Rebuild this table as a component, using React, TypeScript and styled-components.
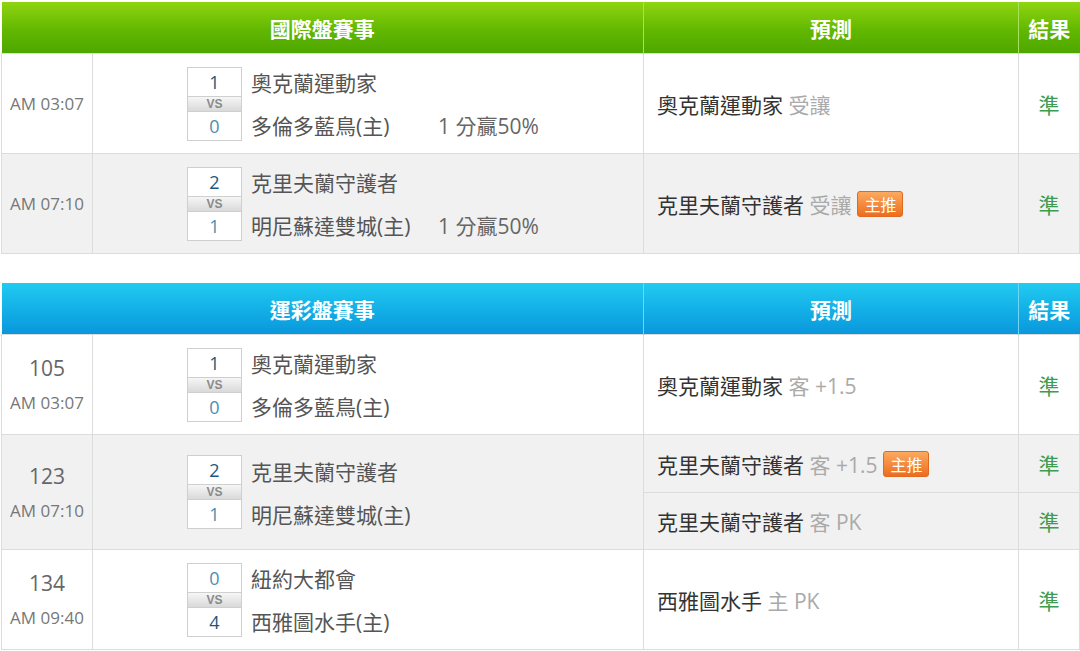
import React from "react";
import styled, { createGlobalStyle } from "styled-components";

const GlobalStyle = createGlobalStyle`
  html, body {
    margin: 0;
    padding: 0;
    background: #fff;
    font-family: "Open Sans", "Noto Sans CJK TC", sans-serif;
  }
`;

type Match = {
  no?: string;
  time: string;
  home: { name: string; score: number };
  away: { name: string; score: number };
  spread?: string;
  picks: { team: string; tip: string; hot?: boolean; result: string }[];
  shade?: boolean;
};

const intl: Match[] = [
  {
    time: "AM 03:07",
    home: { name: "奧克蘭運動家", score: 1 },
    away: { name: "多倫多藍鳥(主)", score: 0 },
    spread: "1 分贏50%",
    picks: [{ team: "奧克蘭運動家", tip: "受讓", result: "準" }],
  },
  {
    time: "AM 07:10",
    home: { name: "克里夫蘭守護者", score: 2 },
    away: { name: "明尼蘇達雙城(主)", score: 1 },
    spread: "1 分贏50%",
    picks: [{ team: "克里夫蘭守護者", tip: "受讓", hot: true, result: "準" }],
    shade: true,
  },
];

const lottery: Match[] = [
  {
    no: "105",
    time: "AM 03:07",
    home: { name: "奧克蘭運動家", score: 1 },
    away: { name: "多倫多藍鳥(主)", score: 0 },
    picks: [{ team: "奧克蘭運動家", tip: "客 +1.5", result: "準" }],
  },
  {
    no: "123",
    time: "AM 07:10",
    home: { name: "克里夫蘭守護者", score: 2 },
    away: { name: "明尼蘇達雙城(主)", score: 1 },
    picks: [
      { team: "克里夫蘭守護者", tip: "客 +1.5", hot: true, result: "準" },
      { team: "克里夫蘭守護者", tip: "客 PK", result: "準" },
    ],
    shade: true,
  },
  {
    no: "134",
    time: "AM 09:40",
    home: { name: "紐約大都會", score: 0 },
    away: { name: "西雅圖水手(主)", score: 4 },
    picks: [{ team: "西雅圖水手", tip: "主 PK", result: "準" }],
  },
];

const App = () => {
  return (
    <Page>
      <GlobalStyle />
      <Board title="國際盤賽事" tone="green" rows={intl} />
      <Board title="運彩盤賽事" tone="blue" rows={lottery} />
    </Page>
  );
};

const Board = ({
  title,
  tone,
  rows,
}: {
  title: string;
  tone: "green" | "blue";
  rows: Match[];
}) => (
  <Table>
    <colgroup>
      <col style={{ width: 91 }} />
      <col style={{ width: 551 }} />
      <col style={{ width: 375 }} />
      <col style={{ width: 61 }} />
    </colgroup>
    <thead>
      <tr>
        <Th tone={tone} colSpan={2}>
          {title}
        </Th>
        <Th tone={tone}>預測</Th>
        <Th tone={tone}>結果</Th>
      </tr>
    </thead>
    <tbody>
      {rows.map((m, i) =>
        m.picks.map((p, j) => (
          <Row
            key={`${i}-${j}`}
            shade={!!m.shade}
            style={{
              height: m.picks.length > 1 ? (j === 0 ? 58 : 57) : 100,
            }}
          >
            {j === 0 && (
              <>
                <TimeCell rowSpan={m.picks.length}>
                  {m.no && <GameNo>{m.no}</GameNo>}
                  <Time>{m.time}</Time>
                </TimeCell>
                <MatchCell rowSpan={m.picks.length}>
                  <MatchInner>
                    <ScoreBox>
                      <Score win={m.home.score > m.away.score}>
                        {m.home.score}
                      </Score>
                      <Vs>VS</Vs>
                      <Score win={m.away.score > m.home.score}>
                        {m.away.score}
                      </Score>
                    </ScoreBox>
                    <Teams>
                      <TeamLine>
                        <TeamName>{m.home.name}</TeamName>
                      </TeamLine>
                      <TeamLine>
                        <TeamName>{m.away.name}</TeamName>
                        {m.spread && <Spread>{m.spread}</Spread>}
                      </TeamLine>
                    </Teams>
                  </MatchInner>
                </MatchCell>
              </>
            )}
            <PickCell>
              <PickTeam>{p.team}</PickTeam> <Tip>{p.tip}</Tip>
              {p.hot && <Hot>主推</Hot>}
            </PickCell>
            <ResultCell>{p.result}</ResultCell>
          </Row>
        ))
      )}
    </tbody>
  </Table>
);

const Page = styled.div`
  padding: 2px 1px 0 1px;
  display: flex;
  flex-direction: column;
  gap: 29px;
`;

const Table = styled.table`
  width: 1078px;
  border-collapse: collapse;
  table-layout: fixed;
`;

const Th = styled.th<{ tone: "green" | "blue" }>`
  height: 51px;
  padding: 0;
  color: #fff;
  font-size: 21px;
  font-weight: bold;
  font-family: "Noto Sans CJK TC", sans-serif;
  text-align: center;
  background: ${(p) =>
    p.tone === "green"
      ? "linear-gradient(to bottom, #8fd410 0%, #62b800 55%, #4ea600 100%)"
      : "linear-gradient(to bottom, #22cbf0 0%, #12aee6 55%, #0a97dc 100%)"};
  border-left: 1px solid
    ${(p) => (p.tone === "green" ? "#a8e060" : "#6fd6f6")};
  &:first-child {
    border-left: none;
  }
`;

const Row = styled.tr<{ shade: boolean }>`
  background: ${(p) => (p.shade ? "#f1f1f1" : "#fff")};
  td {
    border: 1px solid #dcdcdc;
    padding: 0;
  }
`;

const TimeCell = styled.td`
  text-align: center;
  vertical-align: middle;
`;

const GameNo = styled.div`
  font-size: 21px;
  color: #666;
  line-height: 26px;
  margin-bottom: 10px;
`;

const Time = styled.div`
  font-size: 17px;
  color: #777;
`;

const MatchCell = styled.td`
  vertical-align: middle;
`;

const MatchInner = styled.div`
  width: 362px;
  margin: 0 auto;
  display: flex;
  align-items: center;
  gap: 9px;
`;

const ScoreBox = styled.div`
  width: 53px;
  border: 1px solid #cfcfcf;
  background: #fff;
  display: flex;
  flex-direction: column;
`;

const Score = styled.div<{ win: boolean }>`
  height: 28px;
  line-height: 28px;
  text-align: center;
  font-size: 18px;
  color: ${(p) => (p.win ? "#1d5878" : "#4f8db0")};
`;

const Vs = styled.div`
  height: 14px;
  line-height: 14px;
  text-align: center;
  font-family: "Liberation Sans", Arial, sans-serif;
  font-size: 12px;
  font-weight: bold;
  color: #8a8a8a;
  background: linear-gradient(to bottom, #f6f6f6, #d9d9d9);
  border-top: 1px solid #cfcfcf;
  border-bottom: 1px solid #cfcfcf;
`;

const Teams = styled.div`
  display: flex;
  flex-direction: column;
  gap: 15px;
`;

const TeamLine = styled.div`
  display: flex;
  align-items: center;
  height: 28px;
`;

const TeamName = styled.span`
  width: 187px;
  font-size: 21px;
  color: #555;
`;

const Spread = styled.span`
  font-size: 21px;
  color: #666;
  white-space: nowrap;
`;

const PickCell = styled.td`
  padding-left: 13px !important;
  vertical-align: middle;
  font-size: 21px;
  white-space: nowrap;
`;

const PickTeam = styled.span`
  color: #333;
`;

const Tip = styled.span`
  color: #aaa;
`;

const Hot = styled.span`
  display: inline-block;
  margin-left: 6px;
  padding: 0 6px;
  height: 24px;
  line-height: 24px;
  font-size: 16px;
  color: #fff;
  border-radius: 3px;
  border: 1px solid #e06a20;
  background: linear-gradient(to bottom, #fbaa60, #ec6d1e);
  vertical-align: 2px;
  font-family: "Noto Sans CJK TC", sans-serif;
`;

const ResultCell = styled.td`
  text-align: center;
  vertical-align: middle;
  font-size: 21px;
  color: #3e9b4f;
  font-family: "Noto Sans CJK TC", sans-serif;
`;

export default App;
